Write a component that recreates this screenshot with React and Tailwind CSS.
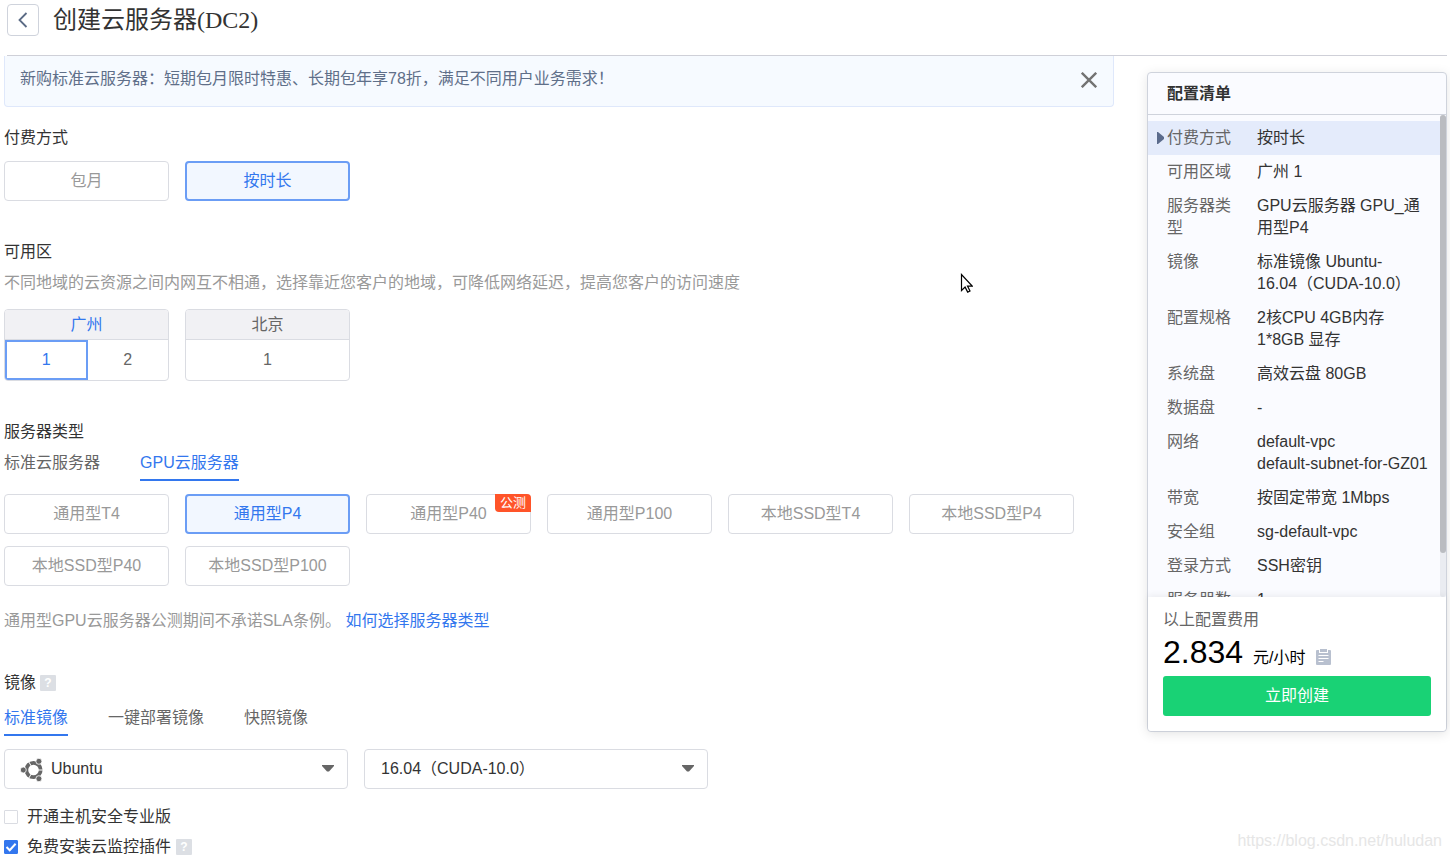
import React, { useState } from 'react';
import clsx from 'clsx';

const serverTypes = [
  { name: '通用型T4' },
  { name: '通用型P4' },
  { name: '通用型P40', badge: '公测' },
  { name: '通用型P100' },
  { name: '本地SSD型T4' },
  { name: '本地SSD型P4' },
  { name: '本地SSD型P40' },
  { name: '本地SSD型P100' },
];

const regions = [
  { name: '广州', zones: ['1', '2'] },
  { name: '北京', zones: ['1'] },
];

const summary = [
  ['付费方式', '按时长'],
  ['可用区域', '广州 1'],
  ['服务器类型', 'GPU云服务器 GPU_通用型P4'],
  ['镜像', '标准镜像 Ubuntu-\n16.04（CUDA-10.0）'],
  ['配置规格', '2核CPU 4GB内存\n1*8GB 显存'],
  ['系统盘', '高效云盘 80GB'],
  ['数据盘', '-'],
  ['网络', 'default-vpc\ndefault-subnet-for-GZ01'],
  ['带宽', '按固定带宽 1Mbps'],
  ['安全组', 'sg-default-vpc'],
  ['登录方式', 'SSH密钥'],
  ['服务器数量', '1'],
];

const OptionButton = ({ active, badge, onClick, children }) => (
  <button
    type="button"
    aria-pressed={active}
    onClick={onClick}
    className={clsx(
      'relative h-10 w-[165px] rounded',
      active ? 'border-2 border-[#6b9df5] bg-[#f2f7ff] text-[#3377ee]' : 'border border-[#dadce2] bg-white text-[#999]'
    )}
  >
    {children}
    {badge && (
      <span className="absolute -top-px -right-px h-[18px] rounded-tr rounded-bl-sm bg-[#ff5429] px-[5px] text-[13px] leading-[18px] text-white">
        {badge}
      </span>
    )}
  </button>
);

const Tabs = ({ items, active, onChange }) => (
  <div role="tablist" className="flex gap-10">
    {items.map((item) => (
      <button
        key={item}
        type="button"
        role="tab"
        aria-selected={item === active}
        onClick={() => onChange(item)}
        className={clsx(
          'h-[31px] border-b-2 pb-1 leading-6',
          item === active ? 'border-[#3377ee] text-[#3377ee]' : 'border-transparent text-[#666]'
        )}
      >
        {item}
      </button>
    ))}
  </div>
);

const Help = () => (
  <span className="inline-flex h-4 w-4 items-center justify-center rounded-[1px] bg-[#dcdfe4] text-xs font-bold leading-4 text-white">?</span>
);

const UbuntuIcon = () => (
  <svg viewBox="0 0 24 24" className="h-6 w-6" fill="none">
    <circle cx="13.5" cy="12" r="7.200" stroke="#666" strokeWidth="3.800" />
    <path d="M13.500 12h10.500M13.500 12 8.200 2.800M13.500 12 8.200 21.200" stroke="#fff" strokeWidth="1" />
    <g fill="#666" stroke="#fff" strokeWidth=".8">
      <circle cx="3.300" cy="12" r="3" />
      <circle cx="18.900" cy="3.300" r="3" />
      <circle cx="18.900" cy="20.700" r="3" />
    </g>
  </svg>
);

const Select = ({ label, options, icon }) => (
  <div className="relative w-[344px]">
    <select
      aria-label={label}
      className={clsx(
        'h-10 w-full appearance-none rounded border border-[#dadce2] bg-white pr-10 text-[#333]',
        icon ? 'pl-[46px]' : 'pl-4'
      )}
    >
      {options.map((o) => (
        <option key={o}>{o}</option>
      ))}
    </select>
    {icon && <span className="pointer-events-none absolute top-[9px] left-4">{icon}</span>}
    <svg viewBox="0 0 12 7" className="pointer-events-none absolute top-4 right-3.5 h-[7px] w-3" fill="#666">
      <path d="M0 0h12v1L7 6.500H5L0 1z" />
    </svg>
  </div>
);

const Checkbox = ({ label, defaultChecked, children }) => (
  <div className="flex h-6 items-center">
    <label className="flex items-center gap-[9px]">
      <span className="relative h-3.5 w-3.5">
        <input
          type="checkbox"
          defaultChecked={defaultChecked}
          className="peer block h-3.5 w-3.5 appearance-none rounded-[1px] border border-[#dadce2] bg-white checked:border-[#3377ee] checked:bg-[#3377ee]"
        />
        <svg viewBox="0 0 14 14" className="pointer-events-none absolute inset-0 hidden h-3.5 w-3.5 peer-checked:block" fill="none" stroke="#fff" strokeWidth="2">
          <path d="M2.500 7l3.200 3.200L11.600 3.800" />
        </svg>
      </span>
      {label}
    </label>
    {children}
  </div>
);

const Summary = () => (
  <aside className="mt-4 w-[300px] shrink-0 rounded border border-[#cfd3dc] bg-[#fafbff] shadow-[0_2px_12px_rgba(0,0,0,0.1)]">
    <h2 className="border-b border-[#cfd3dc] pt-[9px] pb-2 pl-[19px] font-bold leading-6 text-[#333]">配置清单</h2>
    <div className="flex h-[482px]">
      <dl className="flex-1 overflow-y-auto pt-1.5 leading-[22px] [scrollbar-width:none]">
        {summary.map(([name, value], i) => (
          <div key={name} className={clsx('flex py-1.5 pr-3', i === 0 && 'bg-[#e4ebfb]')}>
            <dt className="flex w-[109px] shrink-0 text-[#666]">
              <span className="flex w-[19px] shrink-0 items-center justify-center pl-1.5">
                {i === 0 && (
                  <svg viewBox="0 0 7 12" className="h-3 w-[7px]" fill="#5b6b8c">
                    <path d="M0 0h1l6 5v2l-6 5H0z" />
                  </svg>
                )}
              </span>
              <span className="w-[66px]">{name}</span>
            </dt>
            <dd className="min-w-0 whitespace-pre-line text-[#333]">{value}</dd>
          </div>
        ))}
      </dl>
      <div className="w-1.5 rounded-full bg-[#eaecf1]">
        <div className="h-[438px] rounded-full bg-[#babcc1]" />
      </div>
    </div>
    <div className="relative rounded-b bg-white px-[15px] pt-[11px] pb-[15px] shadow-[0_-2px_6px_rgba(0,0,0,0.06)]">
      <p className="leading-6 text-[#666]">以上配置费用</p>
      <p className="flex h-11 items-baseline gap-2.5 leading-10 text-black">
        <span className="text-[32px]">2.834</span>
        <span>元/小时</span>
        <svg viewBox="0 0 15 16" className="h-4 w-[15px] translate-y-0.5" fill="#b8c0cf">
          <path d="M1 1h13a1 1 0 0 1 1 1v13a1 1 0 0 1-1 1H1a1 1 0 0 1-1-1V2a1 1 0 0 1 1-1z" />
          <path d="M3 0h9v4H3z" fill="#fff" />
          <path d="M4 0h7v3H4z" />
          <path d="M2.500 6.500h10M2.500 9.500h10M2.500 12.500h5" stroke="#fff" />
        </svg>
      </p>
      <button type="button" className="h-10 w-full rounded-[3px] bg-[#19d275] text-white">立即创建</button>
    </div>
  </aside>
);

export default function App() {
  const [payment, setPayment] = useState('按时长');
  const [zone, setZone] = useState('广州1');
  const [family, setFamily] = useState('GPU云服务器');
  const [type, setType] = useState('通用型P4');
  const [image, setImage] = useState('标准镜像');

  return (
    <div className="relative bg-white pr-[3px] pl-1 font-['Liberation_Sans','Noto_Sans_CJK_SC',sans-serif] text-base text-[#333]">
      <header className="ml-[3px] flex h-14 items-start gap-3.5 border-b border-[#cfd0d8] pt-1">
        <button type="button" aria-label="返回" className="flex h-8 w-8 items-center justify-center rounded border border-[#cfd3dc]">
          <svg viewBox="0 0 10 16" className="h-4 w-2.5" fill="none" stroke="#5b6b85" strokeWidth="1.800">
            <path d="M8.500 1 1.500 8l7 7" />
          </svg>
        </button>
        <h1 className="font-['Liberation_Serif','Noto_Sans_CJK_SC',serif] text-2xl leading-8">创建云服务器(DC2)</h1>
      </header>

      <div className="flex items-start gap-[33px]">
        <main className="min-w-0 flex-1">
          <div className="flex h-[51px] items-start justify-between rounded-b border border-t-0 border-[#dfe8fb] bg-[#f6faff] pt-[11px] pr-4 pl-[15px] leading-6 text-[#5f6f89]">
            <p>新购标准云服务器：短期包月限时特惠、长期包年享78折，满足不同用户业务需求！</p>
            <button type="button" aria-label="关闭" className="mt-[5px]">
              <svg viewBox="0 0 16 16" className="h-4 w-4" stroke="#737373" strokeWidth="2.400">
                <path d="M.8.8l14.400 14.400M15.200.8.8 15.200" />
              </svg>
            </button>
          </div>

          <section className="mt-[19px]">
            <h2 className="leading-6">付费方式</h2>
            <div className="mt-[11px] flex flex-wrap gap-x-4 gap-y-3">
              {['包月', '按时长'].map((name) => (
                <OptionButton key={name} active={payment === name} onClick={() => setPayment(name)}>{name}</OptionButton>
              ))}
            </div>
          </section>

          <section className="mt-[39px]">
            <h2 className="leading-6">可用区</h2>
            <p className="mt-[7px] leading-6 text-[#999]">不同地域的云资源之间内网互不相通，选择靠近您客户的地域，可降低网络延迟，提高您客户的访问速度</p>
            <div className="mt-3.5 flex flex-wrap gap-4">
              {regions.map((region) => (
                <div key={region.name} className="w-[165px] overflow-hidden rounded border border-[#dadce2] text-center">
                  <h3 className={clsx('border-b border-[#dadce2] bg-[#f1f1f4] leading-[29px]', zone.startsWith(region.name) ? 'text-[#3377ee]' : 'text-[#666]')}>
                    {region.name}
                  </h3>
                  <div className="flex">
                    {region.zones.map((z) => (
                      <button
                        key={z}
                        type="button"
                        aria-pressed={zone === region.name + z}
                        onClick={() => setZone(region.name + z)}
                        className={clsx('h-10 w-full', zone === region.name + z ? 'border-2 border-[#6b9df5] text-[#3377ee]' : 'text-[#666]')}
                      >
                        {z}
                      </button>
                    ))}
                  </div>
                </div>
              ))}
            </div>
          </section>

          <section className="mt-[39px]">
            <h2 className="mb-1.5 leading-6">服务器类型</h2>
            <Tabs items={['标准云服务器', 'GPU云服务器']} active={family} onChange={setFamily} />
            <div className="mt-[13px] flex flex-wrap gap-x-4 gap-y-3">
              {serverTypes.map(({ name, badge }) => (
                <OptionButton key={name} active={type === name} badge={badge} onClick={() => setType(name)}>{name}</OptionButton>
              ))}
            </div>
            <p className="mt-[23px] leading-6 text-[#999]">
              通用型GPU云服务器公测期间不承诺SLA条例。 <a href="#help" className="text-[#3377ee]">如何选择服务器类型</a>
            </p>
          </section>

          <section className="mt-[38px]">
            <h2 className="mb-2.5 flex items-center gap-1 leading-6">镜像<Help /></h2>
            <Tabs items={['标准镜像', '一键部署镜像', '快照镜像']} active={image} onChange={setImage} />
            <div className="mt-[13px] flex flex-wrap gap-4">
              <Select label="操作系统" options={['Ubuntu']} icon={<UbuntuIcon />} />
              <Select label="版本" options={['16.04（CUDA-10.0）']} />
            </div>
            <div className="mt-4 flex flex-col gap-1.5">
              <Checkbox label="开通主机安全专业版" />
              <Checkbox label="免费安装云监控插件" defaultChecked>
                <span className="ml-[5px] flex"><Help /></span>
              </Checkbox>
            </div>
          </section>
        </main>

        <Summary />
      </div>

      {/* Pointer and watermark sit over the page */}
      <svg viewBox="0 0 13 20" className="pointer-events-none absolute top-[273px] left-[960px] h-5 w-[13px]" fill="#fff" stroke="#000" strokeWidth="1.200">
        <path d="M1.500 1.500v16l3.600-3.400 2.600 5 2.300-1.100-2.500-4.900h4.700z" />
      </svg>
      <span className="pointer-events-none absolute right-2 bottom-1.5 leading-6 text-[#e6e6e6]">https://blog.csdn.net/huludan</span>
    </div>
  );
}
